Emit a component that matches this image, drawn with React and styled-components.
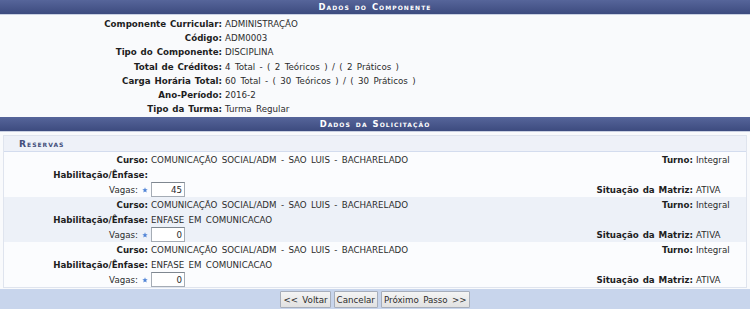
import React from 'react'
import styled, { createGlobalStyle } from 'styled-components'

const GlobalStyle = createGlobalStyle`
  html, body {
    margin: 0;
    padding: 0;
    background: #f9fafc;
    font-family: "DejaVu Sans", Verdana, sans-serif;
    font-size: 8.7px;
    word-spacing: 1.6px;
    color: #2c2c2c;
  }
`

const Page = styled.div`
  width: 750px;
`

const Caption = styled.div`
  height: 14px;
  line-height: 14px;
  background: linear-gradient(#56659a, #3d4b7f);
  border-bottom: 1px solid #c9d0e2;
  color: #fff;
  font-weight: bold;
  font-size: 8.4px;
  font-variant: small-caps;
  letter-spacing: 1.05px;
  word-spacing: 1px;
  text-align: center;
`

const InfoBody = styled.div`
  padding: 2px 0 1px;
  background: #f9fafc;
`

const InfoRow = styled.div`
  display: grid;
  grid-template-columns: 222px 1fr;
  column-gap: 3px;
  height: 14.2px;
  line-height: 14px;
`

const Label = styled.span`
  text-align: right;
  font-weight: ${p => (p.$plain ? 'normal' : 'bold')};
  color: ${p => (p.$plain ? '#2c2c2c' : '#1e1e1e')};
  word-spacing: 0.8px;
  white-space: nowrap;
`

const Value = styled.span`
  white-space: nowrap;
  color: #2c2c2c;
`

const Fieldset = styled.div`
  margin: 3px 3px 0;
  border: 1px solid #dfe4ee;
  background: #fff;
`

const Legend = styled.div`
  height: 15px;
  line-height: 15px;
  padding-left: 15px;
  background: #eef1f8;
  border-bottom: 1px solid #d3dcee;
  color: #434f7c;
  font-weight: bold;
  font-variant: small-caps;
  letter-spacing: 1px;
  font-size: 9.2px;
`

const Group = styled.div`
  background: ${p => (p.$alt ? '#edf1f8' : '#fbfcfe')};
`

const GroupRow = styled.div`
  display: grid;
  grid-template-columns: 144px 1fr auto 50px;
  column-gap: 3px;
  height: 15px;
  align-items: center;
`

const Star = styled.svg`
  width: 6px;
  height: 6px;
  margin-left: 4px;
  vertical-align: 0;
`

const Input = styled.input`
  box-sizing: border-box;
  width: 34px;
  height: 15px;
  margin: 0;
  padding: 0 2px;
  border: 1px solid #a5acb5;
  border-top-color: #7f8790;
  background: #fff;
  font-family: "DejaVu Sans", Verdana, sans-serif;
  font-size: 8.7px;
  color: #2c2c2c;
  text-align: right;
`

const Footer = styled.div`
  margin-top: 1px;
  height: 21px;
  background: #c8d5ec;
  display: flex;
  justify-content: center;
  align-items: center;
  gap: 3px;
`

const Button = styled.button`
  height: 17px;
  padding: 0 2px;
  border: 1px solid #a7aebb;
  border-radius: 1px;
  background: linear-gradient(#f4f4f4, #e1e1e1);
  font-family: "DejaVu Sans", Verdana, sans-serif;
  font-size: 8.7px;
  word-spacing: 1.6px;
  color: #2c2c2c;
`

const componente = [
  ['Componente Curricular:', 'ADMINISTRAÇÃO'],
  ['Código:', 'ADM0003'],
  ['Tipo do Componente:', 'DISCIPLINA'],
  ['Total de Créditos:', '4 Total - ( 2 Teóricos ) / ( 2 Práticos )'],
  ['Carga Horária Total:', '60 Total - ( 30 Teóricos ) / ( 30 Práticos )'],
  ['Ano-Período:', '2016-2'],
  ['Tipo da Turma:', 'Turma Regular'],
]

const reservas = [
  { curso: 'COMUNICAÇÃO SOCIAL/ADM - SAO LUIS - BACHARELADO', enfase: '', vagas: '45' },
  { curso: 'COMUNICAÇÃO SOCIAL/ADM - SAO LUIS - BACHARELADO', enfase: 'ENFASE EM COMUNICACAO', vagas: '0' },
  { curso: 'COMUNICAÇÃO SOCIAL/ADM - SAO LUIS - BACHARELADO', enfase: 'ENFASE EM COMUNICACAO', vagas: '0' },
]

function Required() {
  return (
    <Star viewBox="0 0 10 10">
      <path d="M5 0.5 L6.2 3.6 L9.5 3.8 L7 5.9 L7.8 9.3 L5 7.4 L2.2 9.3 L3 5.9 L0.5 3.8 L3.8 3.6 Z" fill="#4f83d6" />
    </Star>
  )
}

export default function App() {
  return (
    <Page>
      <GlobalStyle />
      <Caption>Dados do Componente</Caption>
      <InfoBody>
        {componente.map(([l, v]) => (
          <InfoRow key={l}>
            <Label>{l}</Label>
            <Value>{v}</Value>
          </InfoRow>
        ))}
      </InfoBody>
      <Caption>Dados da Solicitação</Caption>
      <Fieldset>
        <Legend>Reservas</Legend>
        {reservas.map((r, i) => (
          <Group key={i} $alt={i % 2 === 1}>
            <GroupRow>
              <Label>Curso:</Label>
              <Value>{r.curso}</Value>
              <Label>Turno:</Label>
              <Value>Integral</Value>
            </GroupRow>
            <GroupRow>
              <Label>Habilitação/Ênfase:</Label>
              <Value>{r.enfase}</Value>
            </GroupRow>
            <GroupRow>
              <Label $plain>Vagas:<Required /></Label>
              <Value><Input defaultValue={r.vagas} /></Value>
              <Label>Situação da Matriz:</Label>
              <Value>ATIVA</Value>
            </GroupRow>
          </Group>
        ))}
      </Fieldset>
      <Footer>
        <Button>&lt;&lt; Voltar</Button>
        <Button>Cancelar</Button>
        <Button>Próximo Passo &gt;&gt;</Button>
      </Footer>
    </Page>
  )
}
